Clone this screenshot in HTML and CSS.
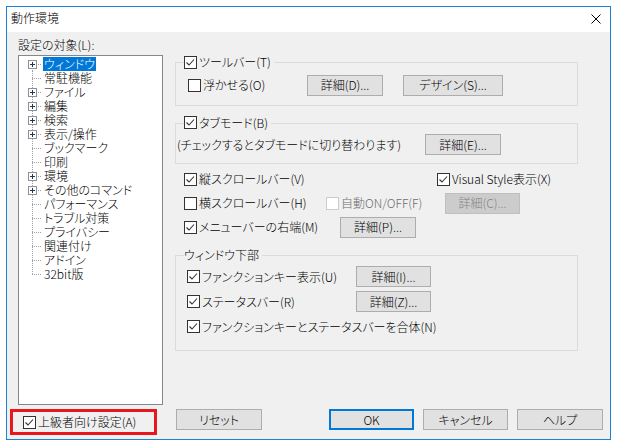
FILE: index.html
```html
<!DOCTYPE html>
<html lang="ja">
<head>
  <meta charset="UTF-8">
  <title>動作環境</title>
  <link rel="stylesheet" href="styles.css">
</head>
<body>
  <div class="window">
    <div class="titlebar">
      <span class="title">動作環境</span>
      <svg class="close" width="10" height="10" viewBox="0 0 10 10"><path d="M0.5 0.5L9.5 9.5M9.5 0.5L0.5 9.5"/></svg>
    </div>

    <div class="client">
      <div class="main">
        <div class="left">
          <div class="caption">設定の対象(L):</div>
          <ul class="tree">
            <li class="first"><span class="twig"><i class="exp"></i></span><span class="item sel">ウィンドウ</span></li>
            <li><span class="twig"></span><span class="item">常駐機能</span></li>
            <li><span class="twig"><i class="exp"></i></span><span class="item">ファイル</span></li>
            <li><span class="twig"><i class="exp"></i></span><span class="item">編集</span></li>
            <li><span class="twig"><i class="exp"></i></span><span class="item">検索</span></li>
            <li><span class="twig"><i class="exp"></i></span><span class="item">表示/操作</span></li>
            <li><span class="twig"></span><span class="item">ブックマーク</span></li>
            <li><span class="twig"></span><span class="item">印刷</span></li>
            <li><span class="twig"><i class="exp"></i></span><span class="item">環境</span></li>
            <li><span class="twig"><i class="exp"></i></span><span class="item">その他のコマンド</span></li>
            <li><span class="twig"></span><span class="item">パフォーマンス</span></li>
            <li><span class="twig"></span><span class="item">トラブル対策</span></li>
            <li><span class="twig"></span><span class="item">プライバシー</span></li>
            <li><span class="twig"></span><span class="item">関連付け</span></li>
            <li><span class="twig"></span><span class="item">アドイン</span></li>
            <li class="last"><span class="twig"></span><span class="item">32bit版</span></li>
          </ul>
        </div>

        <div class="right">
          <fieldset class="group toolbar">
            <legend><label class="cb"><span class="box"><svg viewBox="0 0 11 11"><path d="M1.5 5.5L4 8L9 2.5"/></svg></span>ツールバー(T)</label></legend>
            <div class="row float-row">
              <label class="cb opt"><span class="box"></span>浮かせる(O)</label>
              <button class="btn detail">詳細(D)...</button>
              <button class="btn design">デザイン(S)...</button>
            </div>
          </fieldset>

          <fieldset class="group tabmode">
            <legend><label class="cb"><span class="box"><svg viewBox="0 0 11 11"><path d="M1.5 5.5L4 8L9 2.5"/></svg></span>タブモード(B)</label></legend>
            <div class="row tab-row">
              <span class="opt">(チェックするとタブモードに切り替わります)</span>
              <button class="btn detail">詳細(E)...</button>
            </div>
          </fieldset>

          <div class="plain">
            <div class="line">
              <label class="cb opt vscroll"><span class="box"><svg viewBox="0 0 11 11"><path d="M1.5 5.5L4 8L9 2.5"/></svg></span>縦スクロールバー(V)</label>
              <label class="cb"><span class="box"><svg viewBox="0 0 11 11"><path d="M1.5 5.5L4 8L9 2.5"/></svg></span>Visual Style表示(X)</label>
            </div>
            <div class="line">
              <label class="cb opt hscroll"><span class="box"></span>横スクロールバー(H)</label>
              <label class="cb opt auto off"><span class="box"></span>自動ON/OFF(F)</label>
              <button class="btn detail small" disabled>詳細(C)...</button>
            </div>
            <div class="line">
              <label class="cb opt menu"><span class="box"><svg viewBox="0 0 11 11"><path d="M1.5 5.5L4 8L9 2.5"/></svg></span>メニューバーの右端(M)</label>
              <button class="btn detail">詳細(P)...</button>
            </div>
          </div>

          <fieldset class="group bottom">
            <legend>ウィンドウ下部</legend>
            <div class="gline">
              <label class="cb opt"><span class="box"><svg viewBox="0 0 11 11"><path d="M1.5 5.5L4 8L9 2.5"/></svg></span>ファンクションキー表示(U)</label>
              <button class="btn detail small">詳細(I)...</button>
            </div>
            <div class="gline">
              <label class="cb opt"><span class="box"><svg viewBox="0 0 11 11"><path d="M1.5 5.5L4 8L9 2.5"/></svg></span>ステータスバー(R)</label>
              <button class="btn detail small">詳細(Z)...</button>
            </div>
            <div class="gline">
              <label class="cb"><span class="box"><svg viewBox="0 0 11 11"><path d="M1.5 5.5L4 8L9 2.5"/></svg></span>ファンクションキーとステータスバーを合体(N)</label>
            </div>
          </fieldset>
        </div>
      </div>

      <div class="footer">
        <div class="advanced">
          <label class="cb"><span class="box"><svg viewBox="0 0 11 11"><path d="M1.5 5.5L4 8L9 2.5"/></svg></span>上級者向け設定(A)</label>
        </div>
        <button class="btn reset">リセット</button>
        <button class="btn ok">OK</button>
        <button class="btn cancel">キャンセル</button>
        <button class="btn help">ヘルプ</button>
      </div>
    </div>
  </div>
</body>
</html>
```

FILE: styles.css
```css
body {
  margin: 0;
  background: #fff;
  font-family: "Noto Sans CJK JP", "Noto Sans", sans-serif;
  font-size: 12px;
  font-weight: 300;
  line-height: 14px;
  color: #000;
  font-feature-settings: "palt";
}
.window {
  box-sizing: border-box;
  width: 605px;
  height: 434px;
  margin: 6px 0 0 6px;
  border: 1px solid #1883d7;
  display: flex;
  flex-direction: column;
}
.titlebar {
  height: 25px;
  flex: none;
  box-sizing: border-box;
  padding: 4px 9px 0 4px;
  display: flex;
  align-items: flex-start;
  justify-content: space-between;
  background: #fff;
}
.close {
  margin-top: 3px;
}
.close path {
  stroke: #000;
  stroke-width: 1;
  fill: none;
}
.client {
  flex: 1;
  display: flex;
  flex-direction: column;
  background: #f0f0f0;
  padding: 6px 7px 4px 0;
}
.main {
  flex: 1;
  display: flex;
}
.left {
  width: 145px;
  margin-left: 11px;
}
.caption {
  height: 14px;
}

/* tree view */
.tree {
  list-style: none;
  margin: 3px 0 0;
  padding: 1px 0 0;
  box-sizing: border-box;
  height: 350px;
  border: 1px solid #828790;
  background: #fff;
}
.tree li {
  display: flex;
  height: 14px;
}
.twig {
  width: 24px;
  flex: none;
  background-image:
    repeating-linear-gradient(to bottom, #a0a0a0 0 1px, transparent 1px 2px),
    repeating-linear-gradient(to right, #a0a0a0 0 1px, transparent 1px 2px);
  background-repeat: no-repeat;
  background-position: 13px 0, 13px 7px;
  background-size: 1px 14px, 10px 1px;
}
.tree .first .twig {
  background-position: 13px 7px, 13px 7px;
  background-size: 1px 7px, 10px 1px;
}
.tree .last .twig {
  background-size: 1px 8px, 10px 1px;
}
.exp {
  display: block;
  box-sizing: border-box;
  width: 9px;
  height: 9px;
  margin: 3px 0 0 9px;
  border: 1px solid #919191;
  background:
    linear-gradient(#1e395b, #1e395b) center / 5px 1px no-repeat,
    linear-gradient(#1e395b, #1e395b) center / 1px 5px no-repeat,
    #fff;
}
.item {
  padding: 0 1px;
}
.item.sel {
  background: #0078d7;
  color: #fff;
}

/* right side */
.right {
  width: 403px;
  margin-left: 12px;
  padding-top: 17px;
}
.group {
  margin: 0;
  padding: 0 7px 9px 8px;
  min-width: 0;
  border: 1px solid #dcdcdc;
}
.group legend {
  padding: 0 3px 0 0;
}
.cb {
  display: inline-flex;
  align-items: center;
  height: 14px;
  white-space: nowrap;
}
.box {
  box-sizing: border-box;
  width: 13px;
  height: 13px;
  flex: none;
  margin-right: 2px;
  border: 1px solid #333;
  background: #fff;
}
.box svg {
  display: block;
  width: 11px;
  height: 11px;
}
.box path {
  fill: none;
  stroke: #333;
  stroke-width: 1.1;
}
.off {
  color: #6d6d6d;
}
.off .box {
  border-color: #cccccc;
}
.row,
.line,
.gline {
  display: flex;
  align-items: center;
}
.opt {
  flex: none;
}
.btn {
  box-sizing: border-box;
  height: 21px;
  width: 76px;
  padding: 0;
  flex: none;
  border: 1px solid #adadad;
  background: #e1e1e1;
  font: inherit;
  color: #000;
}
.btn.small {
  width: 75px;
}
.btn:disabled {
  background: #cccccc;
  border-color: #bfbfbf;
  color: #838383;
}

.float-row {
  height: 21px;
  margin: 4px 0 0 4px;
}
.float-row .opt {
  width: 119px;
}
.design {
  width: 100px;
  margin-left: 20px;
}
.tabmode {
  margin-top: 10px;
  padding-bottom: 8px;
}
.tab-row {
  height: 21px;
  margin: 3px 0 0 -7px;
}
.tab-row .opt {
  width: 248px;
}
.plain {
  margin-top: 3px;
  padding-left: 9px;
}
.line {
  height: 24px;
}
.vscroll {
  width: 253px;
}
.hscroll {
  width: 142px;
}
.auto {
  width: 119px;
}
.menu {
  width: 156px;
}
.bottom {
  margin-top: 9px;
  padding-bottom: 11px;
}
.gline {
  height: 25px;
  margin-left: 3px;
}
.gline:first-of-type {
  margin-top: 2px;
}
.gline .opt {
  width: 169px;
}

/* footer */
.footer {
  height: 26px;
  flex: none;
  display: flex;
  align-items: flex-start;
}
.advanced {
  box-sizing: border-box;
  width: 147px;
  height: 26px;
  margin-left: 3px;
  padding-left: 10px;
  display: flex;
  align-items: center;
  border: 3px solid #e8171f;
}
.reset {
  width: 86px;
  margin-left: 19px;
}
.ok {
  width: 85px;
  margin-left: auto;
  border: 2px solid #0078d7;
}
.cancel {
  width: 85px;
  margin-left: 9px;
}
.help {
  width: 86px;
  margin-left: 9px;
}
```
